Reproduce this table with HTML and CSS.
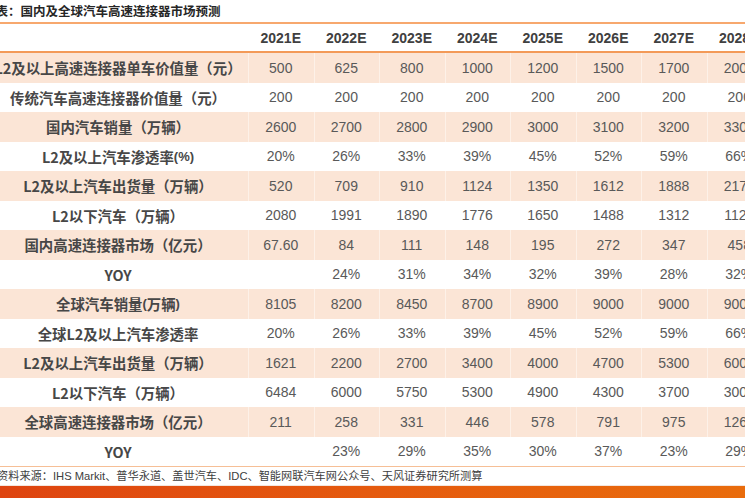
FILE: index.html
```html
<!DOCTYPE html>
<html lang="zh-CN">
<head>
<meta charset="utf-8">
<title>国内及全球汽车高速连接器市场预测</title>
<link rel="stylesheet" href="styles.css">
</head>
<body>
<div class="page">
  <div class="title">图表：国内及全球汽车高速连接器市场预测</div>
  <div class="table">
    <div class="row head">
      <div class="cell label"></div>
      <div class="cell">2021E</div><div class="cell">2022E</div><div class="cell">2023E</div><div class="cell">2024E</div>
      <div class="cell">2025E</div><div class="cell">2026E</div><div class="cell">2027E</div><div class="cell">2028E</div>
    </div>
    <div class="row odd">
      <div class="cell label">L2及以上高速连接器单车价值量（元）</div>
      <div class="cell">500</div><div class="cell">625</div><div class="cell">800</div><div class="cell">1000</div>
      <div class="cell">1200</div><div class="cell">1500</div><div class="cell">1700</div><div class="cell">2000</div>
    </div>
    <div class="row">
      <div class="cell label">传统汽车高速连接器价值量（元）</div>
      <div class="cell">200</div><div class="cell">200</div><div class="cell">200</div><div class="cell">200</div>
      <div class="cell">200</div><div class="cell">200</div><div class="cell">200</div><div class="cell">200</div>
    </div>
    <div class="row odd">
      <div class="cell label">国内汽车销量（万辆）</div>
      <div class="cell">2600</div><div class="cell">2700</div><div class="cell">2800</div><div class="cell">2900</div>
      <div class="cell">3000</div><div class="cell">3100</div><div class="cell">3200</div><div class="cell">3300</div>
    </div>
    <div class="row">
      <div class="cell label">L2及以上汽车渗透率<span class="lat">(%)</span></div>
      <div class="cell">20%</div><div class="cell">26%</div><div class="cell">33%</div><div class="cell">39%</div>
      <div class="cell">45%</div><div class="cell">52%</div><div class="cell">59%</div><div class="cell">66%</div>
    </div>
    <div class="row odd">
      <div class="cell label">L2及以上汽车出货量（万辆）</div>
      <div class="cell">520</div><div class="cell">709</div><div class="cell">910</div><div class="cell">1124</div>
      <div class="cell">1350</div><div class="cell">1612</div><div class="cell">1888</div><div class="cell">2178</div>
    </div>
    <div class="row">
      <div class="cell label">L2以下汽车（万辆）</div>
      <div class="cell">2080</div><div class="cell">1991</div><div class="cell">1890</div><div class="cell">1776</div>
      <div class="cell">1650</div><div class="cell">1488</div><div class="cell">1312</div><div class="cell">1122</div>
    </div>
    <div class="row odd">
      <div class="cell label">国内高速连接器市场（亿元）</div>
      <div class="cell">67.60</div><div class="cell">84</div><div class="cell">111</div><div class="cell">148</div>
      <div class="cell">195</div><div class="cell">272</div><div class="cell">347</div><div class="cell">458</div>
    </div>
    <div class="row">
      <div class="cell label">YOY</div>
      <div class="cell"></div><div class="cell">24%</div><div class="cell">31%</div><div class="cell">34%</div>
      <div class="cell">32%</div><div class="cell">39%</div><div class="cell">28%</div><div class="cell">32%</div>
    </div>
    <div class="row odd">
      <div class="cell label">全球汽车销量<span class="lat">(</span>万辆<span class="lat">)</span></div>
      <div class="cell">8105</div><div class="cell">8200</div><div class="cell">8450</div><div class="cell">8700</div>
      <div class="cell">8900</div><div class="cell">9000</div><div class="cell">9000</div><div class="cell">9000</div>
    </div>
    <div class="row">
      <div class="cell label">全球L2及以上汽车渗透率</div>
      <div class="cell">20%</div><div class="cell">26%</div><div class="cell">33%</div><div class="cell">39%</div>
      <div class="cell">45%</div><div class="cell">52%</div><div class="cell">59%</div><div class="cell">66%</div>
    </div>
    <div class="row odd">
      <div class="cell label">L2及以上汽车出货量（万辆）</div>
      <div class="cell">1621</div><div class="cell">2200</div><div class="cell">2700</div><div class="cell">3400</div>
      <div class="cell">4000</div><div class="cell">4700</div><div class="cell">5300</div><div class="cell">6000</div>
    </div>
    <div class="row">
      <div class="cell label">L2以下汽车（万辆）</div>
      <div class="cell">6484</div><div class="cell">6000</div><div class="cell">5750</div><div class="cell">5300</div>
      <div class="cell">4900</div><div class="cell">4300</div><div class="cell">3700</div><div class="cell">3000</div>
    </div>
    <div class="row odd">
      <div class="cell label">全球高速连接器市场（亿元）</div>
      <div class="cell">211</div><div class="cell">258</div><div class="cell">331</div><div class="cell">446</div>
      <div class="cell">578</div><div class="cell">791</div><div class="cell">975</div><div class="cell">1260</div>
    </div>
    <div class="row">
      <div class="cell label">YOY</div>
      <div class="cell"></div><div class="cell">23%</div><div class="cell">29%</div><div class="cell">35%</div>
      <div class="cell">30%</div><div class="cell">37%</div><div class="cell">23%</div><div class="cell">29%</div>
    </div>
  </div>
  <div class="note">资料来源：IHS Markit、普华永道、盖世汽车、IDC、智能网联汽车网公众号、天风证券研究所测算</div>
  <div class="bar"></div>
</div>
</body>
</html>
```
FILE: styles.css
```css
html, body {
  margin: 0;
  padding: 0;
  background: #ffffff;
}

.page {
  width: 745px;
  height: 498px;
  overflow: hidden;
  display: flex;
  flex-direction: column;
  font-family: "Liberation Sans", "Noto Sans CJK SC", sans-serif;
}

.title {
  height: 22px;
  line-height: 22px;
  font-size: 12.5px;
  font-weight: 700;
  color: #262626;
  white-space: nowrap;
  text-indent: -17px;
  font-family: "Noto Sans CJK SC", sans-serif;
}

.table {
  margin-left: -12px;
  width: 790px;
  border-top: 2px solid #f7a86e;
}

.row {
  display: grid;
  grid-template-columns: 260px repeat(8, 65.5px);
  height: 29.5px;
  align-items: center;
}

.row.head {
  height: 27px;
  border-bottom: 2px solid #f39a58;
}

.row.odd {
  background: #fbe5d6;
}

.cell {
  height: 100%;
  display: flex;
  align-items: center;
  justify-content: center;
  white-space: nowrap;
  font-size: 14px;
  color: #595959;
}

.row.odd .cell + .cell {
  box-shadow: inset 1px 0 0 rgba(255, 255, 255, 0.45);
}

.head .cell {
  font-weight: 700;
  color: #404040;
  font-size: 14px;
}

.cell.label {
  font-family: "Noto Sans CJK SC", sans-serif;
  font-weight: 700;
  font-size: 14.4px;
  color: #474747;
}

.lat {
  font-family: "Liberation Sans", sans-serif;
  font-size: 13px;
}

.note {
  border-top: 1px solid #f6bf96;
  height: 19px;
  line-height: 19px;
  font-size: 11.2px;
  color: #404040;
  white-space: nowrap;
  text-indent: -3px;
  font-family: "Liberation Sans", "Noto Sans CJK SC", sans-serif;
}

.bar {
  flex: 1;
  background: linear-gradient(90deg, #de4410 0%, #e55a0e 50%, #e96c0c 100%);
  box-shadow: 0 -1px 0 #f3e6df;
}
```
